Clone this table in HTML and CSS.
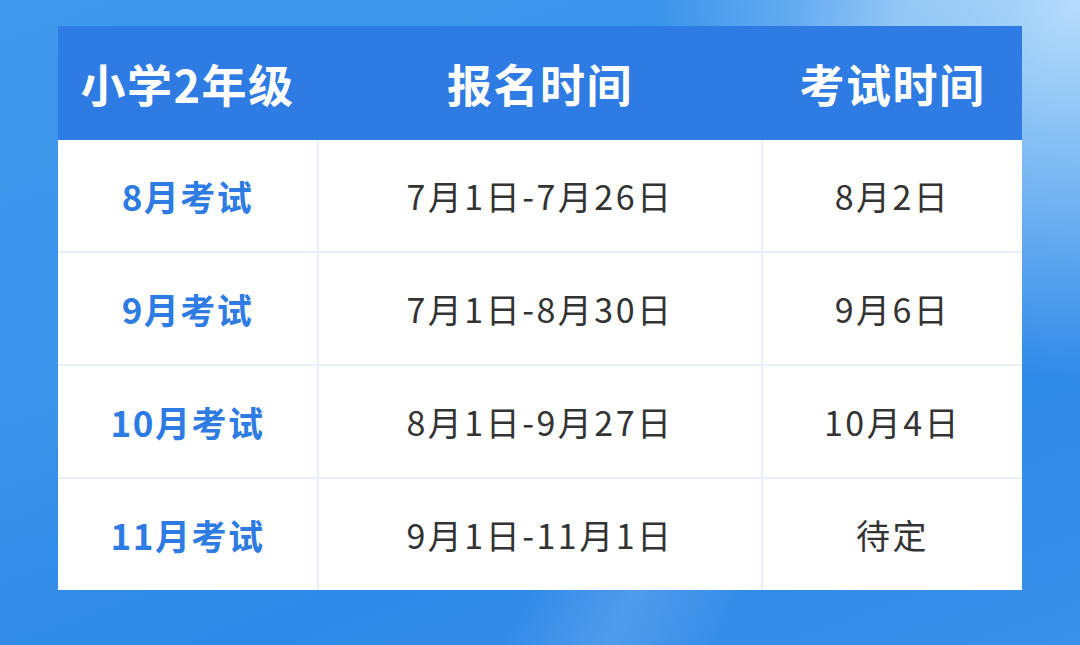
FILE: index.html
```html
<!DOCTYPE html>
<html lang="zh-CN">
<head>
<meta charset="utf-8">
<title>小学2年级考试时间</title>
<link rel="stylesheet" href="styles.css">
</head>
<body>
<div class="page">
  <div class="table">
    <div class="head">
      <div class="hcell">小学2年级</div>
      <div class="hcell">报名时间</div>
      <div class="hcell">考试时间</div>
    </div>
    <div class="body">
      <div class="cell label">8月考试</div>
      <div class="cell">7月1日-7月26日</div>
      <div class="cell">8月2日</div>
      <div class="cell label">9月考试</div>
      <div class="cell">7月1日-8月30日</div>
      <div class="cell">9月6日</div>
      <div class="cell label">10月考试</div>
      <div class="cell">8月1日-9月27日</div>
      <div class="cell">10月4日</div>
      <div class="cell label">11月考试</div>
      <div class="cell">9月1日-11月1日</div>
      <div class="cell">待定</div>
    </div>
  </div>
</div>
</body>
</html>
```

FILE: styles.css
```css
html, body {
  margin: 0;
  padding: 0;
}
body {
  width: 1080px;
  height: 645px;
  overflow: hidden;
  font-family: "Noto Sans CJK SC", "Noto Sans", sans-serif;
}
.page {
  width: 1080px;
  height: 645px;
  box-sizing: border-box;
  padding: 26px 0 0 58px;
  background:
    linear-gradient(115deg, rgba(255,255,255,0) 58%, rgba(255,255,255,0.14) 66%, rgba(255,255,255,0) 74%),
    radial-gradient(ellipse 420px 380px at 1080px 0px, rgba(190,225,252,0.95), rgba(190,225,252,0) 100%),
    linear-gradient(160deg, #3f98ec 0%, #3b93ea 40%, #2f89e8 70%, #3a90ea 100%);
}
.table {
  width: 964px;
  display: flex;
  flex-direction: column;
}
.head {
  display: grid;
  grid-template-columns: 259px 446px 259px;
  height: 114px;
  background: #2e7be3;
}
.hcell {
  display: flex;
  align-items: center;
  justify-content: center;
  color: #ffffff;
  font-size: 45px;
  font-weight: 700;
  letter-spacing: 1.5px;
}
.body {
  display: grid;
  grid-template-columns: 259px 442px 259px;
  grid-auto-rows: 111px;
  gap: 2px;
  background: #e6f0fc;
}
.cell {
  background: #ffffff;
  display: flex;
  align-items: center;
  justify-content: center;
  color: #333333;
  font-size: 34px;
  letter-spacing: 2.5px;
}
.cell.label {
  color: #2e7be3;
  font-weight: 700;
  font-size: 35px;
  letter-spacing: 1.5px;
}
```
